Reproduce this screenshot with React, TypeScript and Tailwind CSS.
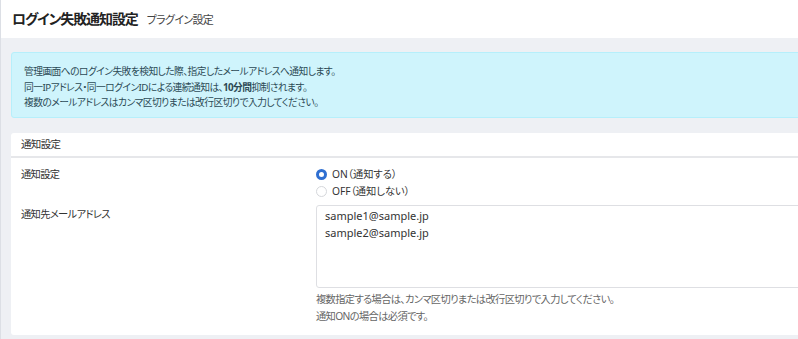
export default function App() {
  return (
    <div
      className="w-[798px] h-[339px] overflow-hidden bg-[#eef0f4] border-l border-[#dcdfe5] text-[#333] [font-feature-settings:'palt'] tracking-[-0.04em]"
      style={{ fontFamily: '"Noto Sans", "Noto Sans CJK JP", sans-serif' }}
    >
      <div className="h-[38px] bg-white flex items-center px-[11px] gap-[9px]">
        <h1 className="text-[14px] font-bold text-[#222] leading-none tracking-[-0.08em]">ログイン失敗通知設定</h1>
        <span className="text-[11px] text-[#444] leading-none">プラグイン設定</span>
      </div>

      <div className="w-[1000px] pl-[10px] pt-[14px]">
        <div className="h-[66px] bg-[#cff4fc] border border-[#b6effb] rounded-[3px] px-[12px] pt-[11px] text-[9.75px] leading-[15.5px] tracking-[-0.55px] text-[#2c4a55]">
          <p>管理画面へのログイン失敗を検知した際、指定したメールアドレスへ通知します。</p>
          <p>
            同一IPアドレス・同一ログインIDによる連続通知は、<b className="font-bold">10分間</b>抑制されます。
          </p>
          <p>複数のメールアドレスはカンマ区切りまたは改行区切りで入力してください。</p>
        </div>

        <div className="mt-[15px] bg-white rounded-[3px] h-[202px]">
          <div className="h-[25px] flex items-center px-[10px] border-b-2 border-[#e6e7ea] text-[10.5px]">
            通知設定
          </div>
          <div className="px-[10px] pt-[8px] text-[10.25px]">
            <div className="flex">
              <div className="w-[295px] leading-[17px]">通知設定</div>
              <div className="flex flex-col tracking-normal">
                <label className="flex items-center gap-[5px] h-[17px]">
                  <span className="w-[11px] h-[11px] rounded-full border-[3px] border-[#2f6fd1] bg-white" />
                  <span>ON（通知する）</span>
                </label>
                <label className="flex items-center gap-[5px] h-[17px]">
                  <span className="w-[11px] h-[11px] rounded-full border border-[#d5d7db] bg-white" />
                  <span>OFF（通知しない）</span>
                </label>
              </div>
            </div>

            <div className="flex mt-[5px]">
              <div className="w-[295px] pt-[1px] leading-[17px]">通知先メールアドレス</div>
              <div className="flex-1">
                <div className="h-[83px] border border-[#dedfe3] rounded-[3px] px-[8px] pt-[2px] leading-[16.5px] text-[11px] tracking-normal text-[#333]">
                  <div>sample1@sample.jp</div>
                  <div>sample2@sample.jp</div>
                </div>
                <div className="mt-[3px] text-[10.25px] leading-[17px] text-[#666]">
                  <p>複数指定する場合は、カンマ区切りまたは改行区切りで入力してください。</p>
                  <p>通知ONの場合は必須です。</p>
                </div>
              </div>
            </div>
          </div>
        </div>
      </div>
    </div>
  );
}
